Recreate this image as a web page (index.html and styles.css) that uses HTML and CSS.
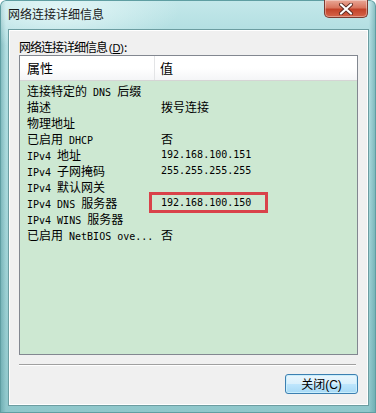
FILE: index.html
```html
<!DOCTYPE html>
<html>
<head>
<meta charset="utf-8">
<link rel="stylesheet" href="styles.css">
</head>
<body>
<div class="window">
  <div class="titlebar">
    <span class="title">网络连接详细信息</span>
    <div class="close">
      <svg width="18" height="12" viewBox="0 0 18 12"><path d="M4 1.5 L14 10.5 M14 1.5 L4 10.5" stroke="#5a2a22" stroke-width="4" stroke-linecap="round"/><path d="M4 1.5 L14 10.5 M14 1.5 L4 10.5" stroke="#ffffff" stroke-width="2.2" stroke-linecap="round"/></svg>
    </div>
  </div>
  <div class="client">
    <div class="label">网络连接详细信息 <span class="acc">(<u>D</u>)</span>:</div>
    <div class="list">
      <div class="head">
        <div class="hc c1">属性</div>
        <div class="hc c2">值</div>
      </div>
      <div class="body">
        <div class="row"><span class="k">连接特定的<span class="l"> DNS </span>后缀</span><span class="v"></span></div>
        <div class="row"><span class="k">描述</span><span class="v">拨号连接</span></div>
        <div class="row"><span class="k">物理地址</span><span class="v"></span></div>
        <div class="row"><span class="k">已启用<span class="l"> DHCP</span></span><span class="v">否</span></div>
        <div class="row"><span class="k"><span class="l">IPv4 </span>地址</span><span class="v l">192.168.100.151</span></div>
        <div class="row"><span class="k"><span class="l">IPv4 </span>子网掩码</span><span class="v l">255.255.255.255</span></div>
        <div class="row"><span class="k"><span class="l">IPv4 </span>默认网关</span><span class="v"></span></div>
        <div class="row"><span class="k"><span class="l">IPv4 DNS </span>服务器</span><span class="v l">192.168.100.150</span></div>
        <div class="row"><span class="k"><span class="l">IPv4 WINS </span>服务器</span><span class="v"></span></div>
        <div class="row"><span class="k">已启用<span class="l"> NetBIOS ove...</span></span><span class="v">否</span></div>
        <div class="mark"></div>
      </div>
    </div>
    <div class="sep"></div>
    <div class="actions">
      <button class="btn">关闭<span class="bl">(C)</span></button>
    </div>
  </div>
</div>
</body>
</html>
```

FILE: styles.css
```css
html, body {
  margin: 0;
  padding: 0;
  width: 376px;
  height: 413px;
  overflow: hidden;
}
body {
  font-family: "Noto Sans CJK SC", "Liberation Sans", sans-serif;
  font-size: 12px;
  color: #000;
}
.window {
  box-sizing: border-box;
  width: 376px;
  height: 413px;
  display: flex;
  flex-direction: column;
  padding: 0 7px 7px 8px;
  border-radius: 6px 6px 0 0;
  background:
    radial-gradient(ellipse 120px 40px at 60px 10px, rgba(235,250,250,0.8), rgba(235,250,250,0)),
    linear-gradient(90deg, rgba(80,150,155,0.55) 0, rgba(80,150,155,0) 6px, rgba(80,150,155,0) 369px, rgba(80,150,155,0.55) 376px),
    linear-gradient(180deg, #c4e8ea 0, #b3dfe2 30px, #a5d6d9 200px, #8fc7cb 413px);
  box-shadow: inset 0 0 0 1px #5f9ea2;
}
.titlebar {
  height: 29px;
  display: flex;
  justify-content: space-between;
  align-items: flex-start;
}
.title {
  margin-top: 5px;
  font-size: 12px;
  line-height: 17px;
  color: #1a1a1a;
}
.close {
  width: 44px;
  height: 18px;
  margin-right: 1px;
  box-sizing: border-box;
  border: 1px solid #7a3a30;
  border-top: none;
  border-radius: 0 0 5px 5px;
  background: linear-gradient(180deg, #e9a897 0, #d9765f 45%, #c3432a 55%, #d5654a 100%);
  display: flex;
  align-items: center;
  justify-content: center;
  box-shadow: inset 0 0 0 1px rgba(255,255,255,0.35);
}
.client {
  flex: 1;
  display: flex;
  flex-direction: column;
  background: #f0f0f0;
  border: 1px solid #6c9da1;
  box-shadow: inset 0 0 0 1px #ffffff;
}
.label {
  margin: 8px 0 0 10px;
  height: 17px;
  line-height: 17px;
  font-size: 12px;
  letter-spacing: -1px;
}
.acc {
  font-family: "Liberation Sans", sans-serif;
  font-size: 11px;
  letter-spacing: 0;
}
.l {
  font-family: "DejaVu Sans Mono", monospace;
  font-size: 10px;
  white-space: pre;
}
.list {
  margin: 0 10px 0 10px;
  height: 298px;
  border: 1px solid #828790;
  display: flex;
  flex-direction: column;
  background: #cde8d2;
}
.head {
  height: 24px;
  display: flex;
  background: linear-gradient(180deg, #ffffff 0, #ffffff 50%, #f4f5f7 100%);
  border-bottom: 1px solid #d5d5d5;
}
.hc {
  line-height: 24px;
  font-size: 13px;
  padding-left: 7px;
}
.c1 {
  width: 127px;
  border-right: 1px solid #e3e4e6;
}
.c2 {
  padding-left: 5px;
}
.body {
  position: relative;
  padding-top: 2px;
}
.row {
  display: flex;
  height: 16px;
  line-height: 16px;
  white-space: nowrap;
}
.k {
  width: 134px;
  padding-left: 7px;
}
.v {
  padding-left: 0;
}
.mark {
  position: absolute;
  left: 129px;
  top: 111px;
  width: 113px;
  height: 15px;
  border: 3px solid #d9424a;
}
.sep {
  margin: 9px 12px 0 10px;
  height: 1px;
  background: #a0a0a0;
  border-bottom: 1px solid #ffffff;
}
.actions {
  display: flex;
  justify-content: flex-end;
  padding: 8px 10px 0 0;
}
.btn {
  width: 73px;
  height: 20px;
  padding: 0;
  font-family: "Noto Sans CJK SC", "Liberation Sans", sans-serif;
  font-size: 12px;
  line-height: 16px;
  color: #000;
  border: 1px solid #3c7fb1;
  border-radius: 3px;
  background: linear-gradient(180deg, #eaf6fd 0, #d9f0fc 50%, #bee6fd 51%, #a7d9f5 100%);
  box-shadow: inset 0 0 0 1px #c9eefc;
}
.bl {
  font-family: "Liberation Sans", sans-serif;
  font-size: 12px;
}
```
